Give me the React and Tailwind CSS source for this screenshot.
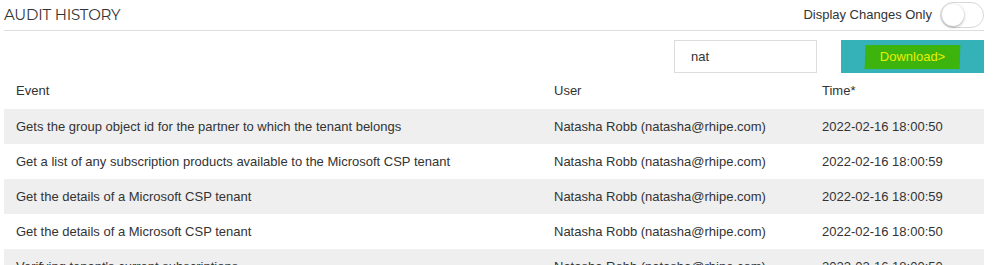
const rows = [
  ["Gets the group object id for the partner to which the tenant belongs", "Natasha Robb (natasha@rhipe.com)", "2022-02-16 18:00:50"],
  ["Get a list of any subscription products available to the Microsoft CSP tenant", "Natasha Robb (natasha@rhipe.com)", "2022-02-16 18:00:59"],
  ["Get the details of a Microsoft CSP tenant", "Natasha Robb (natasha@rhipe.com)", "2022-02-16 18:00:59"],
  ["Get the details of a Microsoft CSP tenant", "Natasha Robb (natasha@rhipe.com)", "2022-02-16 18:00:50"],
  ["Verifying tenant's current subscriptions", "Natasha Robb (natasha@rhipe.com)", "2022-02-16 18:00:50"],
];

export default function App() {
  return (
    <div className="h-[265px] w-[998px] overflow-hidden bg-white font-['Liberation_Sans',Arial,sans-serif] text-[#333]">
      <div className="ml-[4px] mr-[14px]">
        <div className="flex h-[31px] items-center justify-between border-b border-[#dedede]">
          <h1 className="pt-[1px] font-['Montserrat','Noto_Sans',sans-serif] text-[15px] uppercase tracking-[-0.2px] text-[#333]">
            Audit History
          </h1>
          <div className="flex items-center gap-[8px]">
            <span className="text-[13px] text-[#333]">Display Changes Only</span>
            <div className="h-[26px] w-[44px] rounded-full border border-[#d8d8d8] bg-white p-[1px]">
              <div className="h-[22px] w-[22px] rounded-full bg-white shadow-[0_1px_3px_rgba(0,0,0,0.35)]" />
            </div>
          </div>
        </div>

        <div className="mt-[9px] flex h-[33px] justify-end">
          <div className="flex w-[143px] items-center border border-[#dcdcdc] px-[16px] text-[13px] text-[#333]">
            nat
          </div>
          <button className="ml-[24px] flex w-[143px] items-center justify-center bg-[#35b2b8]">
            <span className="relative px-[15px] py-[2px] text-[13px] text-[#e8ef00]">
              <span className="absolute inset-0 -skew-x-2 bg-[#3db30d]" />
              <span className="relative">Download&gt;</span>
            </span>
          </button>
        </div>

        <table className="w-full table-fixed border-collapse text-left text-[13px] text-[#333]">
          <colgroup>
            <col className="w-[550px]" />
            <col className="w-[268px]" />
            <col />
          </colgroup>
          <thead>
            <tr className="h-[36px]">
              <th className="pl-[12px] font-normal">Event</th>
              <th className="font-normal">User</th>
              <th className="font-normal">Time*</th>
            </tr>
          </thead>
          <tbody>
            {rows.map((r, i) => (
              <tr key={i} className={`h-[35px] ${i % 2 === 0 ? "bg-[#efefef]" : "bg-white"}`}>
                <td className="pl-[12px]">{r[0]}</td>
                <td>{r[1]}</td>
                <td>{r[2]}</td>
              </tr>
            ))}
          </tbody>
        </table>
      </div>
    </div>
  );
}
